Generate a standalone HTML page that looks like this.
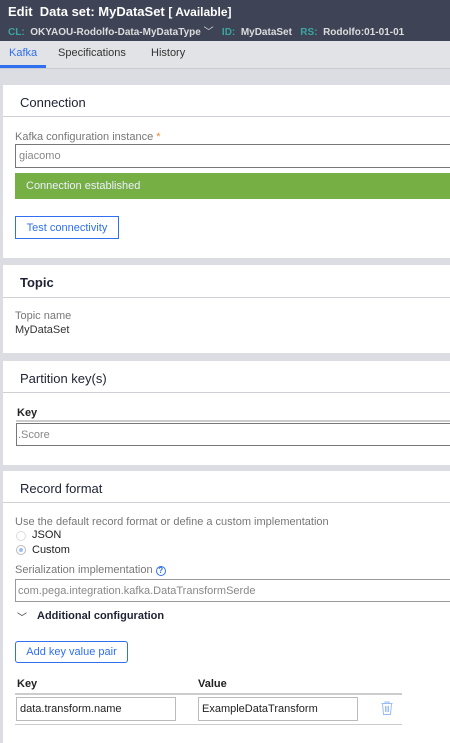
<!DOCTYPE html>
<html><head><style>
*{box-sizing:border-box;margin:0;padding:0}
body{width:450px;height:743px;overflow:hidden;background:#dcdde2;font-family:"Liberation Sans",sans-serif;position:relative;color:#222}
.a{position:absolute;white-space:nowrap}
.hd{left:0;top:0;width:450px;height:41px;background:#3e4356}
.tabs{left:0;top:41px;width:450px;height:28px;background:#e2e3e7;border-bottom:1px solid #c9cace}
.p{position:absolute;left:3px;right:0;background:#fff}
.h{font-size:13px;color:#1e2233;left:20px}
.ln{position:absolute;left:3px;right:0;height:1px;background:#cfd1d6}
.lb{font-size:11px;color:#777}
.in{position:absolute;border:1px solid #888;background:#fff;font-size:11px;color:#888;padding-left:3px;display:flex;align-items:center}
.btn{position:absolute;border:1px solid #2f6ff0;border-radius:2px;color:#2f6ff0;font-size:11px;display:flex;align-items:center;justify-content:center;background:#fff}
</style></head><body>
<div class="a hd"></div>
<div class="a" style="left:8px;top:4px;color:#fff;font-size:13px;font-weight:bold">Edit&nbsp; Data set: MyDataSet <span style="font-size:12px">[ Available]</span></div>
<div class="a" style="left:8px;top:23px;font-size:10px;font-weight:bold;color:#ddd"><span style="color:#3aa6a0">CL:</span>&nbsp; OKYAOU-Rodolfo-Data-MyDataType <span style="font-weight:normal">﹀</span>&nbsp;&nbsp; <span style="color:#3aa6a0">ID:</span>&nbsp; MyDataSet&nbsp;&nbsp; <span style="color:#3aa6a0">RS:</span>&nbsp; Rodolfo:01-01-01</div>
<div class="a tabs"></div>
<div class="a" style="left:9px;top:47px;font-size:11px;color:#2f6ff0">Kafka</div>
<div class="a" style="left:0;top:65px;width:46px;height:3px;background:#2f6ff0"></div>
<div class="a" style="left:58px;top:47px;font-size:11px;color:#333">Specifications</div>
<div class="a" style="left:151px;top:47px;font-size:11px;color:#333">History</div>

<div class="p" style="top:85px;height:173px"></div>
<div class="a h" style="top:95px">Connection</div>
<div class="ln" style="top:116px"></div>
<div class="a lb" style="left:15px;top:131px">Kafka configuration instance <span style="color:#e58b3a">*</span></div>
<div class="in" style="left:15px;top:144px;width:440px;height:24px;border-color:#777">giacomo</div>
<div class="a" style="left:15px;top:173px;width:435px;height:26px;background:#76b044;color:#eef;font-size:11px;line-height:26px;padding-left:11px">Connection established</div>
<div class="btn" style="left:15px;top:216px;width:104px;height:23px;border-radius:0">Test connectivity</div>

<div class="p" style="top:265px;height:88px"></div>
<div class="a h" style="top:275px;font-weight:bold">Topic</div>
<div class="ln" style="top:297px"></div>
<div class="a lb" style="left:15px;top:310px">Topic name</div>
<div class="a" style="left:15px;top:324px;font-size:11px;color:#333">MyDataSet</div>

<div class="p" style="top:361px;height:104px"></div>
<div class="a h" style="top:371px">Partition key(s)</div>
<div class="ln" style="top:392px"></div>
<div class="a" style="left:17px;top:407px;font-size:11px;font-weight:bold">Key</div>
<div class="a" style="left:16px;top:420px;width:434px;height:2px;background:#ccc"></div>
<div class="in" style="left:16px;top:423px;width:440px;height:23px;border-color:#777;padding-left:1px">.Score</div>

<div class="p" style="top:471px;height:272px"></div>
<div class="a h" style="top:481px">Record format</div>
<div class="ln" style="top:502px"></div>
<div class="a lb" style="left:15px;top:516px">Use the default record format or define a custom implementation</div>
<div class="a" style="left:16px;top:531px;width:10px;height:10px;border:1px solid #ddd;border-radius:50%"></div>
<div class="a" style="left:32px;top:529px;font-size:11px">JSON</div>
<div class="a" style="left:16px;top:545px;width:10px;height:10px;border:1px solid #bbb;border-radius:50%;background:#fff"><div style="margin:2px;width:4px;height:4px;border-radius:50%;background:#9bc0f5"></div></div>
<div class="a" style="left:32px;top:544px;font-size:11px">Custom</div>
<div class="a lb" style="left:15px;top:564px">Serialization implementation <span style="display:inline-block;width:10px;height:10px;border:1px solid #2f6ff0;border-radius:50%;color:#2f6ff0;font-size:8px;line-height:8px;text-align:center;font-weight:bold">?</span></div>
<div class="in" style="left:15px;top:579px;width:440px;height:23px;border-color:#999;padding-left:2px">com.pega.integration.kafka.DataTransformSerde</div>
<div class="a" style="left:17px;top:609px;font-size:10px;color:#333">﹀</div>
<div class="a" style="left:37px;top:610px;font-size:11px;font-weight:bold;color:#1e2233">Additional configuration</div>
<div class="btn" style="left:15px;top:641px;width:113px;height:22px;border-radius:3px">Add key value pair</div>
<div class="a" style="left:17px;top:678px;font-size:11px;font-weight:bold">Key</div>
<div class="a" style="left:198px;top:678px;font-size:11px;font-weight:bold">Value</div>
<div class="a" style="left:15px;top:693px;width:387px;height:2px;background:#ccc"></div>
<div class="in" style="left:16px;top:697px;width:160px;height:24px;border-color:#bbb;color:#222;padding-left:3px">data.transform.name</div>
<div class="in" style="left:198px;top:697px;width:160px;height:24px;border-color:#bbb;color:#222;padding-left:3px">ExampleDataTransform</div>
<svg class="a" style="left:381px;top:701px" width="12" height="14" viewBox="0 0 12 14"><path d="M0.5 2.5h11M4 2.5V1h4v1.5M1.5 2.5l1 11h7l1-11M4.5 5v6M6 5v6M7.5 5v6" fill="none" stroke="#9bbcf0" stroke-width="1"/></svg>
<div class="a" style="left:15px;top:724px;width:387px;height:1px;background:#ccc"></div>
</body></html>
